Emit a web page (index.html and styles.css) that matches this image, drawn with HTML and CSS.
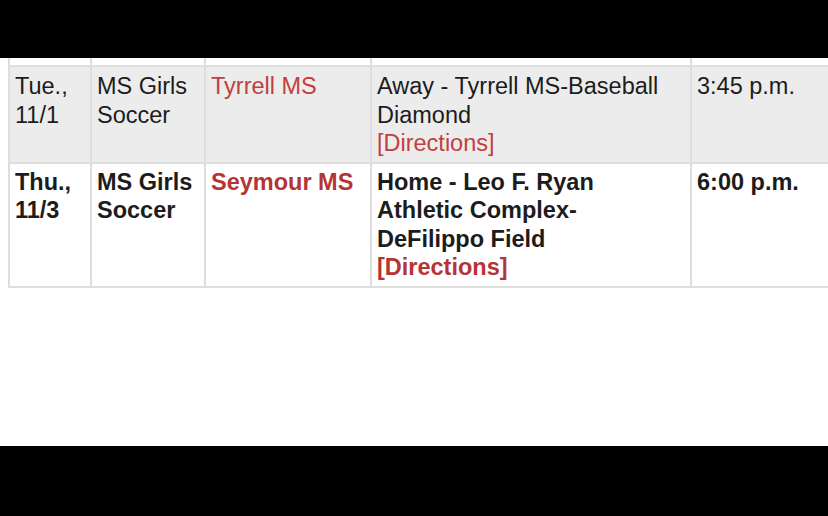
FILE: index.html
```html
<!DOCTYPE html>
<html>
<head>
<meta charset="utf-8">
<link rel="stylesheet" href="styles.css">
</head>
<body>
<div class="bar top"></div>
<div class="page">
  <table class="sched">
    <colgroup>
      <col class="c1"><col class="c2"><col class="c3"><col class="c4"><col class="c5">
    </colgroup>
    <tr class="stub"><td></td><td></td><td></td><td></td><td></td></tr>
    <tr class="alt">
      <td>Tue., 11/1</td>
      <td>MS Girls Soccer</td>
      <td><a class="link">Tyrrell MS</a></td>
      <td>Away - Tyrrell MS-Baseball Diamond<br><a class="link">[Directions]</a></td>
      <td>3:45 p.m.</td>
    </tr>
    <tr class="hl">
      <td>Thu., 11/3</td>
      <td>MS Girls Soccer</td>
      <td><a class="link">Seymour MS</a></td>
      <td>Home - Leo F. Ryan<br>Athletic Complex-<br>DeFilippo Field<br><a class="link">[Directions]</a></td>
      <td>6:00 p.m.</td>
    </tr>
  </table>
</div>
<div class="bar bottom"></div>
</body>
</html>
```
FILE: styles.css
```css
html, body {
  margin: 0;
  padding: 0;
  background: #fff;
}
body {
  width: 828px;
  height: 516px;
  overflow: hidden;
  font-family: "Liberation Sans", Arial, sans-serif;
}
.bar {
  background: #000;
}
.bar.top {
  height: 58px;
}
.bar.bottom {
  height: 70px;
}
.page {
  height: 388px;
  overflow: hidden;
  padding-left: 8px;
}
.sched {
  width: 900px;
  table-layout: fixed;
  border-collapse: collapse;
  font-size: 23.5px;
  line-height: 28.5px;
  color: #1c1c1c;
}
.c1 { width: 82px; }
.c2 { width: 114px; }
.c3 { width: 166px; }
.c4 { width: 320px; }
.c5 { width: 218px; }
.sched td {
  border: 2px solid #dedede;
  vertical-align: top;
  padding: 5px 5px 4px 5px;
}
.sched tr.stub td {
  height: 7px;
  padding: 0;
  border-top: none;
}
.sched tr.alt td {
  background: #ececec;
}
.sched tr.hl td {
  background: #fff;
  font-weight: bold;
  padding-top: 4px;
  padding-bottom: 4px;
}
.link {
  color: #c23f3f;
}
.hl .link {
  color: #b53434;
}
```
